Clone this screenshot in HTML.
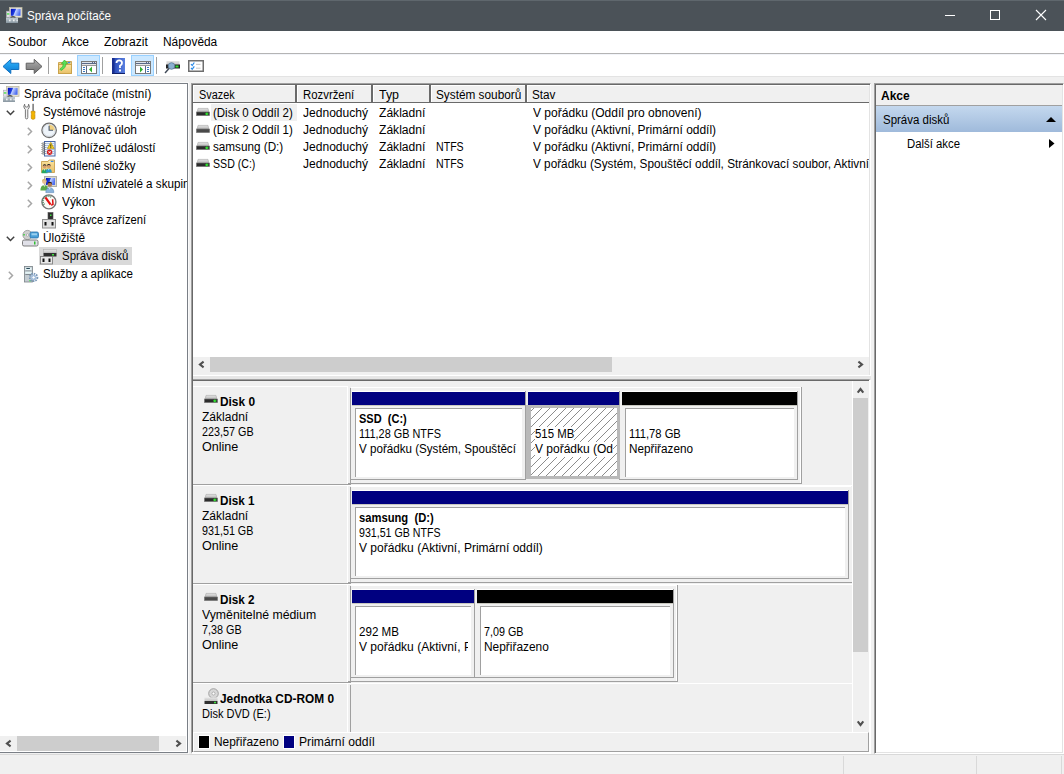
<!DOCTYPE html>
<html><head><meta charset="utf-8"><style>
*{box-sizing:border-box;margin:0;padding:0}
html,body{width:1064px;height:774px;overflow:hidden;background:#f0f0f0;font-family:"Liberation Sans",sans-serif;font-size:12px;color:#000;position:relative}
.a{position:absolute}
.t{position:absolute;white-space:nowrap;line-height:15px;height:15px}
svg{position:absolute;overflow:visible}
</style></head><body>
<svg width="0" height="0" style="position:absolute"><defs>
<linearGradient id="gscr" x1="0" y1="0" x2="1" y2="1"><stop offset="0" stop-color="#0010c0"/><stop offset="0.45" stop-color="#1a3be0"/><stop offset="0.55" stop-color="#c8d4ff"/><stop offset="1" stop-color="#3050e8"/></linearGradient>
<linearGradient id="gscr2" x1="0" y1="0" x2="1" y2="0.3"><stop offset="0" stop-color="#0008b8"/><stop offset="0.45" stop-color="#2040e0"/><stop offset="0.55" stop-color="#c0d0ff"/><stop offset="1" stop-color="#5070f0"/></linearGradient>
<linearGradient id="gdrvtop2" x1="0" y1="0" x2="0" y2="1"><stop offset="0" stop-color="#e4e4e4"/><stop offset="1" stop-color="#b8b8b8"/></linearGradient>
<linearGradient id="gbase" x1="0" y1="0" x2="0" y2="1"><stop offset="0" stop-color="#c6d0d6"/><stop offset="1" stop-color="#8896a0"/></linearGradient>
<linearGradient id="gdrvtop" x1="0" y1="0" x2="0" y2="1"><stop offset="0" stop-color="#e6e6e6"/><stop offset="1" stop-color="#c4c4c4"/></linearGradient>
<linearGradient id="gblue" x1="0" y1="0" x2="0" y2="1"><stop offset="0" stop-color="#2fb6ff"/><stop offset="1" stop-color="#0a78d0"/></linearGradient>
<linearGradient id="ggray" x1="0" y1="0" x2="0" y2="1"><stop offset="0" stop-color="#b0b0b0"/><stop offset="1" stop-color="#6e6e6e"/></linearGradient>
<linearGradient id="gfold" x1="0" y1="0" x2="0" y2="1"><stop offset="0" stop-color="#fbe3a0"/><stop offset="1" stop-color="#e8c068"/></linearGradient>
<linearGradient id="ghelp" x1="0" y1="0" x2="1" y2="0"><stop offset="0" stop-color="#2040b0"/><stop offset="1" stop-color="#5a80e0"/></linearGradient>
</defs></svg>
<div class="a" style="left:0px;top:0px;width:1064px;height:31px;background:#4b5258"></div>
<div class="a" style="left:0px;top:0px;width:1064px;height:1px;background:#5f676d"></div>
<div class="t" style="left:27px;top:9px;color:#fff;"><span id="s0" style="display:inline-block;transform-origin:0 0;transform:scaleX(0.9683);">Správa počítače</span></div>
<svg style="left:6px;top:7px;" width="17" height="17" viewBox="0 0 17 17"><rect x="3.5" y="0.5" width="12.5" height="9.8" fill="#ece8d4" stroke="#bcb8a4" stroke-width="0.8"/><rect x="4.8" y="1.8" width="9.8" height="7" fill="url(#gscr2)"/><rect x="0.4" y="4.2" width="3.6" height="6" fill="#e4e0e8" stroke="#a8a8b0" stroke-width="0.6"/><rect x="0.9" y="6.3" width="2.4" height="1.3" fill="#40e040"/><path d="M4.5 10.6 Q7 9.2 9.5 10.6" stroke="#1a1a1a" stroke-width="1.1" fill="none"/><rect x="0" y="10.6" width="12" height="5.4" fill="url(#gbase)"/><rect x="3.2" y="12.5" width="1.3" height="1.8" fill="#fff"/><rect x="7.2" y="12.5" width="1.3" height="1.8" fill="#fff"/><rect x="10.6" y="12.8" width="1" height="1.5" fill="#fff"/></svg>
<div class="a" style="left:945px;top:15px;width:10px;height:1px;background:#fff"></div>
<div class="a" style="left:990px;top:10px;width:10px;height:10px;border:1px solid #fff"></div>
<svg style="left:1036px;top:10px" width="10" height="10"><path d="M0 0L10 10M10 0L0 10" stroke="#fff" stroke-width="1.1"/></svg>
<div class="a" style="left:0px;top:31px;width:1064px;height:22px;background:#fff"></div>
<div class="a" style="left:0px;top:53px;width:1064px;height:1px;background:#b4b4b4"></div>
<div class="t" style="left:8px;top:35px;"><span id="s1" style="display:inline-block;transform-origin:0 0;transform:scaleX(0.9999);">Soubor</span></div>
<div class="t" style="left:62px;top:35px;"><span id="s2" style="display:inline-block;transform-origin:0 0;transform:scaleX(1.0122);">Akce</span></div>
<div class="t" style="left:104px;top:35px;"><span id="s3" style="display:inline-block;transform-origin:0 0;transform:scaleX(1.0092);">Zobrazit</span></div>
<div class="t" style="left:163px;top:35px;"><span id="s4" style="display:inline-block;transform-origin:0 0;transform:scaleX(0.9913);">Nápověda</span></div>
<div class="a" style="left:0px;top:54px;width:1064px;height:22px;background:#fff"></div>
<div class="a" style="left:0px;top:76px;width:1064px;height:1px;background:#e3e3e3"></div>
<div class="a" style="left:0px;top:54px;width:1064px;height:1px;background:#f2f4f9"></div>
<div class="a" style="left:48px;top:57px;width:1px;height:17px;background:#a0a0a0"></div>
<div class="a" style="left:102px;top:57px;width:1px;height:17px;background:#a0a0a0"></div>
<div class="a" style="left:156px;top:57px;width:1px;height:17px;background:#a0a0a0"></div>
<div class="a" style="left:77px;top:55px;width:23px;height:21px;background:#cce8ff;border:1px solid #99d1ff"></div>
<div class="a" style="left:131px;top:55px;width:23px;height:21px;background:#cce8ff;border:1px solid #99d1ff"></div>
<svg style="left:2px;top:58px;" width="18" height="17" viewBox="0 0 18 17"><path d="M1 8.5 L8.8 1.3 L8.8 5.2 L16.8 5.2 L16.8 11.5 L8.8 11.5 L8.8 15.5 Z" fill="url(#gblue)" stroke="#1070c0" stroke-width="1"/></svg>
<svg style="left:25px;top:58px;" width="18" height="17" viewBox="0 0 18 17"><path d="M17 8.5 L9.2 1.3 L9.2 5.2 L1.2 5.2 L1.2 11.5 L9.2 11.5 L9.2 15.5 Z" fill="url(#ggray)" stroke="#606060" stroke-width="1"/></svg>
<svg style="left:58px;top:60px;" width="15" height="15" viewBox="0 0 15 15"><path d="M0.5 2.5 H5 L6 1.5 H13.5 V13.5 H0.5 Z" fill="#f0d27e" stroke="#c8a048" stroke-width="0.9"/><rect x="0.5" y="4.5" width="13" height="9" fill="url(#gfold)" stroke="#c8a048" stroke-width="0.9"/><ellipse cx="11" cy="2.6" rx="1.5" ry="0.8" fill="#3a8ae8"/><path d="M6.5 0 L9.8 3.6 L8 3.6 Q7.8 8.3 3 10.5 L1.8 9 Q5.6 7.2 5.3 3.6 L3.4 3.6 Z" fill="#58e058" stroke="#2aa82a" stroke-width="0.6"/></svg>
<svg style="left:81px;top:61px;" width="16" height="13" viewBox="0 0 16 13"><rect x="0.5" y="0.5" width="15" height="12" fill="#fff" stroke="#7a7a7a"/><rect x="1" y="1" width="14" height="1" fill="#dde3ea"/><rect x="11" y="1" width="1" height="1" fill="#5a6a88"/><rect x="13" y="1" width="1" height="1" fill="#5a6a88"/><rect x="1" y="2" width="14" height="1" fill="#5a6a88"/><rect x="1" y="3" width="14" height="1" fill="#e6e6e6"/><rect x="1" y="4" width="14" height="1" fill="#9a9a9a"/><rect x="5" y="5" width="1" height="7" fill="#5a6a88"/><rect x="2" y="6" width="2" height="1" fill="#3a78c0"/><rect x="2" y="8" width="2" height="1" fill="#3a78c0"/><rect x="2" y="10" width="2" height="1" fill="#3a78c0"/><path d="M11 5.5 L11 11.5 L8 8.5 Z" fill="#30b030"/></svg>
<svg style="left:135px;top:61px;" width="16" height="13" viewBox="0 0 16 13"><rect x="0.5" y="0.5" width="15" height="12" fill="#fff" stroke="#7a7a7a"/><rect x="1" y="1" width="14" height="1" fill="#dde3ea"/><rect x="11" y="1" width="1" height="1" fill="#5a6a88"/><rect x="13" y="1" width="1" height="1" fill="#5a6a88"/><rect x="1" y="2" width="14" height="1" fill="#5a6a88"/><rect x="1" y="3" width="14" height="1" fill="#e6e6e6"/><rect x="1" y="4" width="14" height="1" fill="#9a9a9a"/><rect x="10" y="5" width="1" height="7" fill="#5a6a88"/><rect x="12" y="6" width="2" height="1" fill="#3a78c0"/><rect x="12" y="8" width="2" height="1" fill="#3a78c0"/><rect x="12" y="10" width="2" height="1" fill="#3a78c0"/><path d="M5 5.5 L5 11.5 L8 8.5 Z" fill="#30b030"/></svg>
<svg style="left:112px;top:58px;" width="13" height="16" viewBox="0 0 13 16"><rect x="0" y="0" width="13" height="16" fill="url(#ghelp)"/><rect x="0" y="0" width="2.5" height="16" fill="#1a2f90"/><rect x="0" y="15" width="13" height="1" fill="#10206a"/><path d="M4.5 5 Q4.5 2.3 7.2 2.3 Q10 2.3 10 5 Q10 6.8 8 7.8 L8 10" fill="none" stroke="#fff" stroke-width="1.8"/><rect x="7" y="11.5" width="2" height="2" fill="#fff"/></svg>
<svg style="left:164px;top:60px;" width="17" height="15" viewBox="0 0 17 15"><rect x="2.5" y="1" width="13" height="4" fill="url(#gdrvtop)"/><rect x="2" y="4.5" width="14" height="4" fill="#202020"/><rect x="11.5" y="5.5" width="3" height="2" fill="#30e030"/><circle cx="7.5" cy="6" r="3.3" fill="#8ab0d0" stroke="#5a7a98" stroke-width="0.8"/><path d="M5 8.5 L1 13" stroke="#404a58" stroke-width="1.4"/></svg>
<svg style="left:188px;top:60px;" width="16" height="12" viewBox="0 0 16 12"><rect x="0.75" y="0.75" width="14.5" height="10.5" fill="#fff" stroke="#6e6e6e" stroke-width="1.5"/><path d="M3 4 L4.2 5.5 L6.3 2.5M3 7.8 L4.2 9.3 L6.3 6.3" fill="none" stroke="#2a8ae8" stroke-width="1.2"/><path d="M8 4.4h4.5M8 8.2h4.5" stroke="#c0c0c0" stroke-width="0.9"/></svg>
<div class="a" style="left:0px;top:82px;width:189px;height:1px;background:#fafafa"></div>
<div class="a" style="left:188px;top:82px;width:1px;height:672px;background:#fafafa"></div>
<div class="a" style="left:0px;top:83px;width:188px;height:670px;background:#fff;border-top:1px solid #7a7f86;border-right:1px solid #7a7f86;border-bottom:1px solid #7a7f86"></div>
<div class="a" style="left:39px;top:247px;width:93px;height:18px;background:#d9d9d9"></div>
<svg style="left:3px;top:86px;" width="17" height="17" viewBox="0 0 17 17"><rect x="3.5" y="0.5" width="12.5" height="9.8" fill="#ece8d4" stroke="#bcb8a4" stroke-width="0.8"/><rect x="4.8" y="1.8" width="9.8" height="7" fill="url(#gscr2)"/><rect x="0.4" y="4.2" width="3.6" height="6" fill="#e4e0e8" stroke="#a8a8b0" stroke-width="0.6"/><rect x="0.9" y="6.3" width="2.4" height="1.3" fill="#40e040"/><path d="M4.5 10.6 Q7 9.2 9.5 10.6" stroke="#1a1a1a" stroke-width="1.1" fill="none"/><rect x="0" y="10.6" width="12" height="5.4" fill="url(#gbase)"/><rect x="3.2" y="12.5" width="1.3" height="1.8" fill="#fff"/><rect x="7.2" y="12.5" width="1.3" height="1.8" fill="#fff"/><rect x="10.6" y="12.8" width="1" height="1.5" fill="#fff"/></svg>
<svg style="left:23px;top:103px;" width="13" height="17" viewBox="0 0 13 17"><path d="M1.6 1.2 Q-0.2 3.8 1.8 6 L2.4 6.5 L2.4 14.6 Q2.4 15.9 3.6 15.9 Q4.8 15.9 4.8 14.6 L4.8 6.5 L5.4 6 Q7.4 3.8 5.6 1.2 L5.2 3.6 Q3.6 4.6 2 3.6 Z" fill="#f2f2f2" stroke="#6a6a6a" stroke-width="0.9"/><rect x="9.4" y="0.8" width="1.4" height="7.5" fill="#6a6a6a"/><path d="M8.2 8.3 L12 8.3 L12 10.2 L11.4 11 L11.9 11.6 L11.9 15.2 Q11.9 16.3 10.1 16.3 Q8.3 16.3 8.3 15.2 L8.3 11.6 L8.8 11 L8.2 10.2 Z" fill="#f2b400" stroke="#c48a00" stroke-width="0.7"/></svg>
<svg style="left:41px;top:122px;" width="17" height="17" viewBox="0 0 17 17"><circle cx="8.1" cy="8.3" r="7.2" fill="#eef4fa" stroke="#6e6e6e" stroke-width="1.3"/><circle cx="8.1" cy="8.3" r="6" fill="none" stroke="#c8ccd4" stroke-width="0.6"/><path d="M8.1 8.3 L8.1 2.6 A5.7 5.7 0 0 1 13.8 8.3 Z" fill="#f0d080"/><path d="M8.1 3.8 L8.1 8.8 M7.6 8.3 L12 8.3" stroke="#4a5a70" stroke-width="1.1" fill="none"/></svg>
<svg style="left:41px;top:141px;" width="15" height="16" viewBox="0 0 15 16"><rect x="3.5" y="0.5" width="10.5" height="14.5" fill="#eef4fc" stroke="#4a68a8"/><path d="M5 2.5h8" stroke="#a8c0e0" stroke-width="0.9"/><path d="M5 4.5h8" stroke="#a8c0e0" stroke-width="0.9"/><path d="M5 6.5h8" stroke="#a8c0e0" stroke-width="0.9"/><path d="M5 8.5h8" stroke="#a8c0e0" stroke-width="0.9"/><path d="M5 10.5h8" stroke="#a8c0e0" stroke-width="0.9"/><path d="M5 12.5h8" stroke="#a8c0e0" stroke-width="0.9"/><ellipse cx="2.6" cy="2.5" rx="1.7" ry="0.65" fill="none" stroke="#6a6a6a" stroke-width="0.8"/><ellipse cx="2.6" cy="4.5" rx="1.7" ry="0.65" fill="none" stroke="#6a6a6a" stroke-width="0.8"/><ellipse cx="2.6" cy="6.5" rx="1.7" ry="0.65" fill="none" stroke="#6a6a6a" stroke-width="0.8"/><ellipse cx="2.6" cy="8.5" rx="1.7" ry="0.65" fill="none" stroke="#6a6a6a" stroke-width="0.8"/><ellipse cx="2.6" cy="10.5" rx="1.7" ry="0.65" fill="none" stroke="#6a6a6a" stroke-width="0.8"/><ellipse cx="2.6" cy="12.5" rx="1.7" ry="0.65" fill="none" stroke="#6a6a6a" stroke-width="0.8"/><path d="M9.8 1.3 L13.2 7.6 L6.4 7.6 Z" fill="#f4d020" stroke="#b08800" stroke-width="0.6"/><rect x="9.35" y="3.3" width="0.9" height="2.4" fill="#222"/><rect x="9.35" y="6.2" width="0.9" height="0.9" fill="#222"/><circle cx="8.6" cy="11.2" r="2.7" fill="#d42020"/><path d="M7.5 10.1l2.2 2.2M9.7 10.1l-2.2 2.2" stroke="#fff" stroke-width="0.9"/></svg>
<svg style="left:41px;top:159px;" width="15" height="15" viewBox="0 0 15 15"><path d="M0.5 2.5 L7 2.5 L8 1 L13.5 1 L13.5 13.5 L0.5 13.5 Z" fill="url(#gfold)" stroke="#c8a050" stroke-width="0.9"/><rect x="9.5" y="1.8" width="3" height="1.2" fill="#3a8ae0"/><rect x="8.5" y="1.8" width="1" height="1.2" fill="#fff"/><circle cx="3.6" cy="7.6" r="1.9" fill="#d8a070"/><path d="M1.7 7.3 Q1.8 5.2 3.6 5.3 Q5.4 5.2 5.5 7.3 Q4.5 6.2 3.6 6.3 Q2.6 6.2 1.7 7.3 Z" fill="#202020"/><path d="M0.6 14.3 Q0.6 10.2 3.6 10.2 Q6.6 10.2 6.6 14.3 Z" fill="#28a860"/><path d="M3 10.3 L3.6 12 L4.2 10.3 Z" fill="#fff"/><circle cx="7.8" cy="7.2" r="1.9" fill="#d8a070"/><path d="M5.9 6.9 Q6 4.8 7.8 4.9 Q9.6 4.8 9.7 6.9 Q8.7 5.8 7.8 5.9 Q6.8 5.8 5.9 6.9 Z" fill="#202020"/><path d="M4.8 13.6 Q4.8 9.8 7.8 9.8 Q10.8 9.8 10.8 13.6 Z" fill="#2a98d0"/><path d="M7.2 9.9 L7.8 11.6 L8.4 9.9 Z" fill="#fff"/></svg>
<svg style="left:40px;top:176px;" width="17" height="17" viewBox="0 0 17 17"><rect x="4.5" y="0.5" width="12" height="10" fill="#d8d8d0" stroke="#b0b0a8"/><rect x="6" y="2" width="9" height="7" fill="url(#gscr2)"/><circle cx="4.3" cy="5.6" r="2.3" fill="#e8c090"/><path d="M2 5.4 Q2 3 4.3 3 Q6.6 3 6.6 5.4 Q5.5 4.2 4.3 4.3 Q3 4.2 2 5.4 Z" fill="#c8b060"/><path d="M0.4 14.5 Q0.4 9.2 4.3 9.2 Q8.2 9.2 8.2 14.5 Z" fill="#5aa848"/><path d="M3.7 9.3 L4.3 11.2 L4.9 9.3 Z" fill="#fff"/><circle cx="9.8" cy="8.4" r="2.3" fill="#b07850"/><path d="M7.5 8.2 Q7.5 5.8 9.8 5.8 Q12.1 5.8 12.1 8.2 Q11 7 9.8 7.1 Q8.5 7 7.5 8.2 Z" fill="#282018"/><path d="M5.8 16.6 Q5.8 11.8 9.8 11.8 Q13.8 11.8 13.8 16.6 Z" fill="#8ab4dc" stroke="#5a88b8" stroke-width="0.6"/><path d="M9.2 11.9 L9.8 13.8 L10.4 11.9 Z" fill="#fff"/></svg>
<svg style="left:41px;top:194px;" width="17" height="17" viewBox="0 0 17 17"><circle cx="7.9" cy="7.9" r="7" fill="#fbfaf6" stroke="#767676" stroke-width="1.4"/><path d="M3.4 10.6 A5 5 0 0 1 10.5 3.4" stroke="#4a8060" stroke-width="1.5" fill="none" stroke-dasharray="1.1 0.9"/><path d="M11.6 5.3 L12 10.4 L10.2 11.2" stroke="#dd1010" stroke-width="1.5" fill="none"/><path d="M4.4 3.4 L9.6 10.6" stroke="#e41010" stroke-width="2.2"/></svg>
<svg style="left:42px;top:212px;" width="14" height="17" viewBox="0 0 14 17"><rect x="6" y="0.5" width="5" height="8" fill="#303030" stroke="#505050" stroke-width="0.6"/><rect x="8" y="2.5" width="1.5" height="1.5" fill="#40e040"/><rect x="0.5" y="7.5" width="13" height="8.5" fill="#e0e0e0" stroke="#909090"/><rect x="2.5" y="10" width="2" height="3.5" fill="#101010"/><rect x="9.5" y="10" width="2" height="3.5" fill="#101010"/></svg>
<svg style="left:22px;top:230px;" width="17" height="17" viewBox="0 0 17 17"><circle cx="5.5" cy="5" r="4.6" fill="#d0d0d0" stroke="#909090" stroke-width="0.8"/><circle cx="5.5" cy="5" r="1.2" fill="#fff" stroke="#808080" stroke-width="0.5"/><rect x="1.3" y="4" width="1.5" height="1.5" fill="#40d040"/><rect x="8" y="2" width="8.5" height="6" rx="1.5" fill="#4aa0d8" stroke="#2a70a8" stroke-width="0.8"/><rect x="9.5" y="3.3" width="5.5" height="2" fill="#9ad0f0"/><rect x="0.5" y="10" width="15.5" height="6" rx="1.5" fill="#e0e0e8" stroke="#707070" stroke-width="0.9"/><rect x="12" y="11.5" width="1.5" height="3" fill="#30c030"/></svg>
<svg style="left:40px;top:249px;" width="17" height="16" viewBox="0 0 17 16"><rect x="3.5" y="0.5" width="13" height="3.5" fill="url(#gdrvtop)" stroke="#b0b0b0" stroke-width="0.6"/><rect x="3.5" y="4" width="13" height="3.5" fill="#303030"/><rect x="12" y="5" width="2" height="1.5" fill="#40e040"/><rect x="0.5" y="7.5" width="12" height="7.5" fill="#e8e8e8" stroke="#808080" stroke-width="0.9"/><rect x="2.5" y="9.5" width="2" height="3.5" fill="#101010"/><rect x="8.5" y="9.5" width="2" height="3.5" fill="#101010"/></svg>
<svg style="left:24px;top:266px;" width="15" height="17" viewBox="0 0 15 17"><rect x="0.4" y="0.4" width="8" height="15.6" fill="#c4ccd2" stroke="#7a8288" stroke-width="0.8"/><rect x="1.3" y="1.6" width="6.2" height="2.6" fill="#e4f4f6"/><rect x="2.3" y="2" width="3.6" height="1" fill="#284858"/><rect x="1.3" y="4.6" width="6.2" height="0.8" fill="#707880"/><rect x="1.3" y="5.6" width="6.2" height="2.2" fill="#e4f4f6"/><rect x="1.3" y="8" width="6.2" height="0.8" fill="#707880"/><rect x="5.3" y="14" width="2" height="1.3" fill="#50e050"/><circle cx="9.6" cy="11.4" r="3.7" fill="none" stroke="#7a98b8" stroke-width="2" stroke-dasharray="1.5 0.95"/><circle cx="9.6" cy="11.4" r="2.8" fill="#a8c0dc"/><path d="M9.6 9.8 L10.4 11.4 L9.6 13 L8.8 11.4 Z" fill="#fff"/><path d="M8 11.4 L9.6 10.6 L11.2 11.4 L9.6 12.2 Z" fill="#fff"/></svg>
<div class="t" style="left:24px;top:87px;width:163px;overflow:hidden;"><span id="s5" style="display:inline-block;transform-origin:0 0;transform:scaleX(0.9736);">Správa počítače (místní)</span></div>
<div class="t" style="left:43px;top:105px;width:144px;overflow:hidden;"><span id="s6" style="display:inline-block;transform-origin:0 0;transform:scaleX(0.9742);">Systémové nástroje</span></div>
<svg style="left:6px;top:110px;" width="10" height="7" viewBox="0 0 10 7"><path d="M0.8 0.8L4.5 4.5L8.2 0.8" fill="none" stroke="#404040" stroke-width="1.5"/></svg>
<div class="t" style="left:62px;top:123px;width:125px;overflow:hidden;"><span id="s7" style="display:inline-block;transform-origin:0 0;transform:scaleX(0.9947);">Plánovač úloh</span></div>
<svg style="left:27px;top:127px;" width="7" height="10" viewBox="0 0 7 10"><path d="M0.8 0.8L4.5 4.5L0.8 8.2" fill="none" stroke="#a6a6a6" stroke-width="1.5"/></svg>
<div class="t" style="left:62px;top:141px;width:125px;overflow:hidden;"><span id="s8" style="display:inline-block;transform-origin:0 0;transform:scaleX(0.9800);">Prohlížeč událostí</span></div>
<svg style="left:27px;top:145px;" width="7" height="10" viewBox="0 0 7 10"><path d="M0.8 0.8L4.5 4.5L0.8 8.2" fill="none" stroke="#a6a6a6" stroke-width="1.5"/></svg>
<div class="t" style="left:62px;top:159px;width:125px;overflow:hidden;"><span id="s9" style="display:inline-block;transform-origin:0 0;transform:scaleX(0.9506);">Sdílené složky</span></div>
<svg style="left:27px;top:163px;" width="7" height="10" viewBox="0 0 7 10"><path d="M0.8 0.8L4.5 4.5L0.8 8.2" fill="none" stroke="#a6a6a6" stroke-width="1.5"/></svg>
<div class="t" style="left:62px;top:177px;width:125px;overflow:hidden;"><span style="display:inline-block;transform-origin:0 0;transform:scaleX(0.97)">Místní uživatelé a skupiny</span></div>
<svg style="left:27px;top:181px;" width="7" height="10" viewBox="0 0 7 10"><path d="M0.8 0.8L4.5 4.5L0.8 8.2" fill="none" stroke="#a6a6a6" stroke-width="1.5"/></svg>
<div class="t" style="left:62px;top:195px;width:125px;overflow:hidden;"><span id="s10" style="display:inline-block;transform-origin:0 0;transform:scaleX(0.9889);">Výkon</span></div>
<svg style="left:27px;top:199px;" width="7" height="10" viewBox="0 0 7 10"><path d="M0.8 0.8L4.5 4.5L0.8 8.2" fill="none" stroke="#a6a6a6" stroke-width="1.5"/></svg>
<div class="t" style="left:62px;top:213px;width:125px;overflow:hidden;"><span id="s11" style="display:inline-block;transform-origin:0 0;transform:scaleX(0.9343);">Správce zařízení</span></div>
<div class="t" style="left:43px;top:231px;width:144px;overflow:hidden;"><span id="s12" style="display:inline-block;transform-origin:0 0;transform:scaleX(0.9835);">Úložiště</span></div>
<svg style="left:6px;top:236px;" width="10" height="7" viewBox="0 0 10 7"><path d="M0.8 0.8L4.5 4.5L8.2 0.8" fill="none" stroke="#404040" stroke-width="1.5"/></svg>
<div class="t" style="left:62px;top:249px;width:125px;overflow:hidden;"><span id="s13" style="display:inline-block;transform-origin:0 0;transform:scaleX(0.9565);">Správa disků</span></div>
<div class="t" style="left:43px;top:267px;width:144px;overflow:hidden;"><span id="s14" style="display:inline-block;transform-origin:0 0;transform:scaleX(0.9633);">Služby a aplikace</span></div>
<svg style="left:8px;top:271px;" width="7" height="10" viewBox="0 0 7 10"><path d="M0.8 0.8L4.5 4.5L0.8 8.2" fill="none" stroke="#a6a6a6" stroke-width="1.5"/></svg>
<div class="a" style="left:0px;top:736px;width:187px;height:16px;background:#f0f0f0;border-right:1px solid #fff;border-bottom:1px solid #fff"></div>
<div class="a" style="left:17px;top:736px;width:142px;height:15px;background:#cdcdcd"></div>
<svg style="left:4px;top:739px;" width="9" height="10" viewBox="0 0 9 10"><path d="M6.6 1.7 L3 4.5 L6.6 7.3" fill="none" stroke="#505050" stroke-width="2.1"/></svg>
<svg style="left:175px;top:739px;" width="9" height="10" viewBox="0 0 9 10"><path d="M1.4 1.7 L5 4.5 L1.4 7.3" fill="none" stroke="#505050" stroke-width="2.1"/></svg>
<div class="a" style="left:191px;top:83px;width:680px;height:293px;background:#fff;border-top:1px solid #a0a0a0;border-left:1px solid #a0a0a0;border-right:1px solid #fff;border-bottom:1px solid #fff;box-shadow:inset 1px 1px #696969,inset -1px -1px #e3e3e3"></div>
<div class="a" style="left:193px;top:85px;width:676px;height:18px;background:#f0f0f0;border-top:1px solid #fff;border-bottom:1px solid #6a6a6a"></div>
<div class="a" style="left:193px;top:85px;width:1px;height:17px;background:#fff"></div>
<div class="a" style="left:295px;top:85px;width:2px;height:17px;background:#6a6a6a"></div>
<div class="a" style="left:297px;top:86px;width:1px;height:16px;background:#fff"></div>
<div class="a" style="left:371px;top:85px;width:2px;height:17px;background:#6a6a6a"></div>
<div class="a" style="left:373px;top:86px;width:1px;height:16px;background:#fff"></div>
<div class="a" style="left:429px;top:85px;width:2px;height:17px;background:#6a6a6a"></div>
<div class="a" style="left:431px;top:86px;width:1px;height:16px;background:#fff"></div>
<div class="a" style="left:525px;top:85px;width:2px;height:17px;background:#6a6a6a"></div>
<div class="a" style="left:527px;top:86px;width:1px;height:16px;background:#fff"></div>
<div class="t" style="left:199px;top:88px;"><span id="s15" style="display:inline-block;transform-origin:0 0;transform:scaleX(0.9046);">Svazek</span></div>
<div class="t" style="left:303px;top:88px;"><span id="s16" style="display:inline-block;transform-origin:0 0;transform:scaleX(0.9466);">Rozvržení</span></div>
<div class="t" style="left:379px;top:88px;"><span id="s17" style="display:inline-block;transform-origin:0 0;transform:scaleX(1.0358);">Typ</span></div>
<div class="t" style="left:436px;top:88px;"><span id="s18" style="display:inline-block;transform-origin:0 0;transform:scaleX(0.9834);">Systém souborů</span></div>
<div class="t" style="left:532px;top:88px;"><span id="s19" style="display:inline-block;transform-origin:0 0;transform:scaleX(0.9776);">Stav</span></div>
<div class="a" style="left:211px;top:104px;width:86px;height:17px;background:#f0f0f0"></div>
<svg style="left:196px;top:108px;" width="14" height="8" viewBox="0 0 14 8"><path d="M1.2 4 L2 0.4 H12 L12.8 4 Z" fill="url(#gdrvtop2)" stroke="#a8a8a8" stroke-width="0.6"/><rect x="0.4" y="4" width="13.2" height="3.6" fill="#2c2c2c" stroke="#7a7a7a" stroke-width="0.6"/><rect x="10" y="4.6" width="1.6" height="2.6" fill="#30e030"/><rect x="9.2" y="5.3" width="3.2" height="1.2" fill="#30e030"/></svg>
<div class="t" style="left:213px;top:106px;"><span id="s20" style="display:inline-block;transform-origin:0 0;transform:scaleX(0.9568);">(Disk 0 Oddíl 2)</span></div>
<div class="t" style="left:303px;top:106px;"><span id="s21" style="display:inline-block;transform-origin:0 0;transform:scaleX(1.0044);">Jednoduchý</span></div>
<div class="t" style="left:379px;top:106px;"><span id="s22" style="display:inline-block;transform-origin:0 0;transform:scaleX(1.0082);">Základní</span></div>
<div class="t" style="left:436px;top:106px;"></div>
<div class="t" style="left:533px;top:106px;width:336px;overflow:hidden;"><span id="s23" style="display:inline-block;transform-origin:0 0;transform:scaleX(1.0029);">V pořádku (Oddíl pro obnovení)</span></div>
<svg style="left:196px;top:125px;" width="14" height="8" viewBox="0 0 14 8"><path d="M1.2 4 L2 0.4 H12 L12.8 4 Z" fill="url(#gdrvtop2)" stroke="#a8a8a8" stroke-width="0.6"/><rect x="0.4" y="4" width="13.2" height="3.6" fill="#4a4a4a" stroke="#7a7a7a" stroke-width="0.6"/></svg>
<div class="t" style="left:213px;top:123px;"><span id="s24" style="display:inline-block;transform-origin:0 0;transform:scaleX(0.9568);">(Disk 2 Oddíl 1)</span></div>
<div class="t" style="left:303px;top:123px;"><span id="s25" style="display:inline-block;transform-origin:0 0;transform:scaleX(1.0044);">Jednoduchý</span></div>
<div class="t" style="left:379px;top:123px;"><span id="s26" style="display:inline-block;transform-origin:0 0;transform:scaleX(1.0082);">Základní</span></div>
<div class="t" style="left:436px;top:123px;"></div>
<div class="t" style="left:533px;top:123px;width:336px;overflow:hidden;"><span id="s27" style="display:inline-block;transform-origin:0 0;transform:scaleX(0.9983);">V pořádku (Aktivní, Primární oddíl)</span></div>
<svg style="left:196px;top:142px;" width="14" height="8" viewBox="0 0 14 8"><path d="M1.2 4 L2 0.4 H12 L12.8 4 Z" fill="url(#gdrvtop2)" stroke="#a8a8a8" stroke-width="0.6"/><rect x="0.4" y="4" width="13.2" height="3.6" fill="#2c2c2c" stroke="#7a7a7a" stroke-width="0.6"/><rect x="10" y="4.6" width="1.6" height="2.6" fill="#30e030"/><rect x="9.2" y="5.3" width="3.2" height="1.2" fill="#30e030"/></svg>
<div class="t" style="left:213px;top:140px;"><span id="s28" style="display:inline-block;transform-origin:0 0;transform:scaleX(0.9756);">samsung (D:)</span></div>
<div class="t" style="left:303px;top:140px;"><span id="s29" style="display:inline-block;transform-origin:0 0;transform:scaleX(1.0044);">Jednoduchý</span></div>
<div class="t" style="left:379px;top:140px;"><span id="s30" style="display:inline-block;transform-origin:0 0;transform:scaleX(1.0082);">Základní</span></div>
<div class="t" style="left:436px;top:140px;"><span id="s31" style="display:inline-block;transform-origin:0 0;transform:scaleX(0.8832);">NTFS</span></div>
<div class="t" style="left:533px;top:140px;width:336px;overflow:hidden;"><span id="s32" style="display:inline-block;transform-origin:0 0;transform:scaleX(0.9983);">V pořádku (Aktivní, Primární oddíl)</span></div>
<svg style="left:196px;top:159px;" width="14" height="8" viewBox="0 0 14 8"><path d="M1.2 4 L2 0.4 H12 L12.8 4 Z" fill="url(#gdrvtop2)" stroke="#a8a8a8" stroke-width="0.6"/><rect x="0.4" y="4" width="13.2" height="3.6" fill="#2c2c2c" stroke="#7a7a7a" stroke-width="0.6"/><rect x="10" y="4.6" width="1.6" height="2.6" fill="#30e030"/><rect x="9.2" y="5.3" width="3.2" height="1.2" fill="#30e030"/></svg>
<div class="t" style="left:213px;top:157px;"><span id="s33" style="display:inline-block;transform-origin:0 0;transform:scaleX(0.8830);">SSD (C:)</span></div>
<div class="t" style="left:303px;top:157px;"><span id="s34" style="display:inline-block;transform-origin:0 0;transform:scaleX(1.0044);">Jednoduchý</span></div>
<div class="t" style="left:379px;top:157px;"><span id="s35" style="display:inline-block;transform-origin:0 0;transform:scaleX(1.0082);">Základní</span></div>
<div class="t" style="left:436px;top:157px;"><span id="s36" style="display:inline-block;transform-origin:0 0;transform:scaleX(0.8832);">NTFS</span></div>
<div class="t" style="left:533px;top:157px;width:336px;overflow:hidden;"><span style="display:inline-block;transform-origin:0 0;transform:scaleX(0.98)">V pořádku (Systém, Spouštěcí oddíl, Stránkovací soubor, Aktivní, Výpis stavu systému, Primární oddíl)</span></div>
<div class="a" style="left:193px;top:357px;width:676px;height:18px;background:#f0f0f0"></div>
<div class="a" style="left:210px;top:357px;width:402px;height:15px;background:#cdcdcd"></div>
<svg style="left:197px;top:360px;" width="9" height="10" viewBox="0 0 9 10"><path d="M6.6 1.7 L3 4.5 L6.6 7.3" fill="none" stroke="#505050" stroke-width="2.1"/></svg>
<svg style="left:857px;top:360px;" width="9" height="10" viewBox="0 0 9 10"><path d="M1.4 1.7 L5 4.5 L1.4 7.3" fill="none" stroke="#505050" stroke-width="2.1"/></svg>
<div class="a" style="left:193px;top:375px;width:677px;height:1px;background:#fff"></div>
<div class="a" style="left:193px;top:376px;width:678px;height:3px;background:#e6e6e6"></div>
<div class="a" style="left:191px;top:379px;width:680px;height:375px;background:#f0f0f0;border-top:1px solid #a0a0a0;border-left:1px solid #a0a0a0;border-right:2px solid #fff;border-bottom:2px solid #fff;box-shadow:inset 1px 1px #696969"></div>
<div class="a" style="left:191px;top:375px;width:1px;height:5px;background:#a0a0a0"></div>
<div class="a" style="left:192px;top:375px;width:1px;height:5px;background:#696969"></div>
<div class="a" style="left:853px;top:381px;width:16px;height:351px;background:#f0f0f0"></div>
<div class="a" style="left:853px;top:398px;width:15px;height:254px;background:#cdcdcd"></div>
<svg style="left:856px;top:386px;" width="10" height="9" viewBox="0 0 10 9"><path d="M1.7 6.6 L4.5 3 L7.3 6.6" fill="none" stroke="#505050" stroke-width="2.1"/></svg>
<svg style="left:856px;top:720px;" width="10" height="9" viewBox="0 0 10 9"><path d="M1.7 1.4 L4.5 5 L7.3 1.4" fill="none" stroke="#505050" stroke-width="2.1"/></svg>
<div class="a" style="left:852px;top:381px;width:1px;height:351px;background:#fff"></div>
<div class="a" style="left:193px;top:386px;width:155px;height:98px;background:#f0f0f0;border-top:1px solid #fff;border-right:1px solid #fff"></div>
<div class="a" style="left:350px;top:388px;width:1px;height:97px;background:#a0a0a0"></div>
<div class="a" style="left:193px;top:484px;width:155px;height:1px;background:#a0a0a0"></div>
<div class="a" style="left:348px;top:483px;width:2px;height:2px;background:#a0a0a0"></div>
<div class="a" style="left:350px;top:483px;width:452px;height:1px;background:#a0a0a0"></div>
<div class="a" style="left:193px;top:485px;width:659px;height:1px;background:#fff"></div>
<div class="t" style="left:220px;top:395px;font-weight:bold;"><span id="s37" style="display:inline-block;transform-origin:0 0;transform:scaleX(0.9895);">Disk 0</span></div>
<div class="t" style="left:202px;top:410px;"><span id="s38" style="display:inline-block;transform-origin:0 0;transform:scaleX(1.0037);">Základní</span></div>
<div class="t" style="left:202px;top:425px;"><span id="s39" style="display:inline-block;transform-origin:0 0;transform:scaleX(0.8993);">223,57 GB</span></div>
<div class="t" style="left:202px;top:440px;"><span id="s40" style="display:inline-block;transform-origin:0 0;transform:scaleX(1.0479);">Online</span></div>
<svg style="left:204px;top:395px;" width="14" height="8" viewBox="0 0 14 8"><path d="M1.2 4 L2 0.4 H12 L12.8 4 Z" fill="url(#gdrvtop2)" stroke="#a8a8a8" stroke-width="0.6"/><rect x="0.4" y="4" width="13.2" height="3.6" fill="#2c2c2c" stroke="#7a7a7a" stroke-width="0.6"/><rect x="10" y="4.6" width="1.6" height="2.6" fill="#30e030"/><rect x="9.2" y="5.3" width="3.2" height="1.2" fill="#30e030"/></svg>
<div class="a" style="left:351px;top:387px;width:450px;height:1px;background:#fff"></div>
<div class="a" style="left:800px;top:387px;width:1px;height:96px;background:#fff"></div>
<div class="a" style="left:801px;top:387px;width:1px;height:97px;background:#a0a0a0"></div>
<div class="a" style="left:352px;top:391px;width:173px;height:1px;background:#fff"></div>
<div class="a" style="left:352px;top:392px;width:173px;height:13px;background:#000080"></div>
<div class="a" style="left:525px;top:391px;width:1px;height:89px;background:#a0a0a0"></div>
<div class="a" style="left:352px;top:405px;width:173px;height:1px;background:#c8c8c0"></div>
<div class="a" style="left:351px;top:479px;width:175px;height:1px;background:#a0a0a0"></div>
<div class="a" style="left:355px;top:408px;width:167px;height:69px;background:#fff;border-left:1px solid #a0a0a0;border-top:1px solid #a0a0a0"></div>
<div class="t" style="left:359px;top:412px;font-weight:bold;width:160px;overflow:hidden;"><span id="s41" style="display:inline-block;transform-origin:0 0;transform:scaleX(0.9176);">SSD&nbsp;&nbsp;(C:)</span></div>
<div class="t" style="left:359px;top:427px;width:160px;overflow:hidden;"><span id="s42" style="display:inline-block;transform-origin:0 0;transform:scaleX(0.9074);">111,28 GB NTFS</span></div>
<div class="t" style="left:359px;top:442px;width:160px;overflow:hidden;"><span style="display:inline-block;transform-origin:0 0;transform:scaleX(0.968)">V pořádku (Systém, Spouštěcí oddíl, Stránkovací soubor)</span></div>
<div class="a" style="left:528px;top:391px;width:91px;height:1px;background:#fff"></div>
<div class="a" style="left:528px;top:392px;width:91px;height:13px;background:#000080"></div>
<div class="a" style="left:619px;top:391px;width:1px;height:89px;background:#a0a0a0"></div>
<div class="a" style="left:526px;top:405px;width:94px;height:74px;background:#b9b9b9"></div>
<svg style="left:531px;top:408px" width="86" height="68" shape-rendering="crispEdges"><defs><pattern id="hp" patternUnits="userSpaceOnUse" width="8" height="8" x="3" y="0"><rect width="8" height="8" fill="#fff"/><path d="M0 8L8 0" stroke="#8c8c8c" stroke-width="1"/></pattern></defs><rect width="86" height="68" fill="url(#hp)"/></svg>
<div class="t" style="left:535px;top:427px;width:78px;overflow:hidden;"><span id="s43" style="display:inline-block;transform-origin:0 0;transform:scaleX(0.9490);background:#fff">515 MB</span></div>
<div class="t" style="left:535px;top:442px;width:78px;overflow:hidden;"><span style="display:inline-block;background:#fff">V pořádku (Oddíl pro obnovení)</span></div>
<div class="a" style="left:622px;top:391px;width:175px;height:1px;background:#fff"></div>
<div class="a" style="left:622px;top:392px;width:175px;height:13px;background:#000000"></div>
<div class="a" style="left:797px;top:391px;width:1px;height:89px;background:#a0a0a0"></div>
<div class="a" style="left:622px;top:405px;width:175px;height:1px;background:#c8c8c0"></div>
<div class="a" style="left:620px;top:479px;width:178px;height:1px;background:#a0a0a0"></div>
<div class="a" style="left:625px;top:408px;width:169px;height:69px;background:#fff;border-left:1px solid #a0a0a0;border-top:1px solid #a0a0a0"></div>
<div class="t" style="left:629px;top:427px;width:162px;overflow:hidden;"><span id="s44" style="display:inline-block;transform-origin:0 0;transform:scaleX(0.9323);">111,78 GB</span></div>
<div class="t" style="left:629px;top:442px;width:162px;overflow:hidden;"><span id="s45" style="display:inline-block;transform-origin:0 0;transform:scaleX(0.9786);">Nepřiřazeno</span></div>
<div class="a" style="left:193px;top:485px;width:155px;height:98px;background:#f0f0f0;border-top:1px solid #fff;border-right:1px solid #fff"></div>
<div class="a" style="left:350px;top:487px;width:1px;height:97px;background:#a0a0a0"></div>
<div class="a" style="left:193px;top:583px;width:155px;height:1px;background:#a0a0a0"></div>
<div class="a" style="left:348px;top:582px;width:2px;height:2px;background:#a0a0a0"></div>
<div class="a" style="left:350px;top:582px;width:502px;height:1px;background:#a0a0a0"></div>
<div class="a" style="left:193px;top:584px;width:659px;height:1px;background:#fff"></div>
<div class="t" style="left:220px;top:494px;font-weight:bold;"><span id="s46" style="display:inline-block;transform-origin:0 0;transform:scaleX(0.9750);">Disk 1</span></div>
<div class="t" style="left:202px;top:509px;"><span id="s47" style="display:inline-block;transform-origin:0 0;transform:scaleX(1.0037);">Základní</span></div>
<div class="t" style="left:202px;top:524px;"><span id="s48" style="display:inline-block;transform-origin:0 0;transform:scaleX(0.8958);">931,51 GB</span></div>
<div class="t" style="left:202px;top:539px;"><span id="s49" style="display:inline-block;transform-origin:0 0;transform:scaleX(1.0479);">Online</span></div>
<svg style="left:204px;top:494px;" width="14" height="8" viewBox="0 0 14 8"><path d="M1.2 4 L2 0.4 H12 L12.8 4 Z" fill="url(#gdrvtop2)" stroke="#a8a8a8" stroke-width="0.6"/><rect x="0.4" y="4" width="13.2" height="3.6" fill="#2c2c2c" stroke="#7a7a7a" stroke-width="0.6"/><rect x="10" y="4.6" width="1.6" height="2.6" fill="#30e030"/><rect x="9.2" y="5.3" width="3.2" height="1.2" fill="#30e030"/></svg>
<div class="a" style="left:351px;top:486px;width:500px;height:1px;background:#fff"></div>
<div class="a" style="left:352px;top:490px;width:496px;height:1px;background:#fff"></div>
<div class="a" style="left:352px;top:491px;width:496px;height:13px;background:#000080"></div>
<div class="a" style="left:848px;top:490px;width:1px;height:89px;background:#a0a0a0"></div>
<div class="a" style="left:352px;top:504px;width:496px;height:1px;background:#c8c8c0"></div>
<div class="a" style="left:351px;top:578px;width:498px;height:1px;background:#a0a0a0"></div>
<div class="a" style="left:355px;top:507px;width:490px;height:69px;background:#fff;border-left:1px solid #a0a0a0;border-top:1px solid #a0a0a0"></div>
<div class="t" style="left:359px;top:511px;font-weight:bold;width:483px;overflow:hidden;"><span id="s50" style="display:inline-block;transform-origin:0 0;transform:scaleX(0.9340);">samsung&nbsp;&nbsp;(D:)</span></div>
<div class="t" style="left:359px;top:526px;width:483px;overflow:hidden;"><span id="s51" style="display:inline-block;transform-origin:0 0;transform:scaleX(0.8853);">931,51 GB NTFS</span></div>
<div class="t" style="left:359px;top:541px;width:483px;overflow:hidden;"><span id="s52" style="display:inline-block;transform-origin:0 0;transform:scaleX(1.0016);">V pořádku (Aktivní, Primární oddíl)</span></div>
<div class="a" style="left:193px;top:584px;width:155px;height:98px;background:#f0f0f0;border-top:1px solid #fff;border-right:1px solid #fff"></div>
<div class="a" style="left:350px;top:586px;width:1px;height:97px;background:#a0a0a0"></div>
<div class="a" style="left:193px;top:682px;width:155px;height:1px;background:#a0a0a0"></div>
<div class="a" style="left:348px;top:681px;width:2px;height:2px;background:#a0a0a0"></div>
<div class="a" style="left:350px;top:681px;width:328px;height:1px;background:#a0a0a0"></div>
<div class="a" style="left:193px;top:683px;width:659px;height:1px;background:#fff"></div>
<div class="t" style="left:220px;top:593px;font-weight:bold;"><span id="s53" style="display:inline-block;transform-origin:0 0;transform:scaleX(0.9750);">Disk 2</span></div>
<div class="t" style="left:202px;top:608px;"><span id="s54" style="display:inline-block;transform-origin:0 0;transform:scaleX(1.0225);">Vyměnitelné médium</span></div>
<div class="t" style="left:202px;top:623px;"><span id="s55" style="display:inline-block;transform-origin:0 0;transform:scaleX(0.8993);">7,38 GB</span></div>
<div class="t" style="left:202px;top:638px;"><span id="s56" style="display:inline-block;transform-origin:0 0;transform:scaleX(1.0479);">Online</span></div>
<svg style="left:204px;top:593px;" width="14" height="8" viewBox="0 0 14 8"><path d="M1.2 4 L2 0.4 H12 L12.8 4 Z" fill="url(#gdrvtop2)" stroke="#a8a8a8" stroke-width="0.6"/><rect x="0.4" y="4" width="13.2" height="3.6" fill="#4a4a4a" stroke="#7a7a7a" stroke-width="0.6"/></svg>
<div class="a" style="left:351px;top:585px;width:326px;height:1px;background:#fff"></div>
<div class="a" style="left:676px;top:585px;width:1px;height:96px;background:#fff"></div>
<div class="a" style="left:677px;top:585px;width:1px;height:97px;background:#a0a0a0"></div>
<div class="a" style="left:352px;top:589px;width:122px;height:1px;background:#fff"></div>
<div class="a" style="left:352px;top:590px;width:122px;height:13px;background:#000080"></div>
<div class="a" style="left:474px;top:589px;width:1px;height:89px;background:#a0a0a0"></div>
<div class="a" style="left:352px;top:603px;width:122px;height:1px;background:#c8c8c0"></div>
<div class="a" style="left:351px;top:677px;width:124px;height:1px;background:#a0a0a0"></div>
<div class="a" style="left:355px;top:606px;width:116px;height:69px;background:#fff;border-left:1px solid #a0a0a0;border-top:1px solid #a0a0a0"></div>
<div class="t" style="left:359px;top:625px;width:109px;overflow:hidden;"><span id="s57" style="display:inline-block;transform-origin:0 0;transform:scaleX(0.9663);">292 MB</span></div>
<div class="t" style="left:359px;top:640px;width:109px;overflow:hidden;"><span id="s58" style="display:inline-block;transform-origin:0 0;transform:scaleX(1.0016);">V pořádku (Aktivní, Primární oddíl)</span></div>
<div class="a" style="left:477px;top:589px;width:196px;height:1px;background:#fff"></div>
<div class="a" style="left:477px;top:590px;width:196px;height:13px;background:#000000"></div>
<div class="a" style="left:673px;top:589px;width:1px;height:89px;background:#a0a0a0"></div>
<div class="a" style="left:477px;top:603px;width:196px;height:1px;background:#c8c8c0"></div>
<div class="a" style="left:475px;top:677px;width:199px;height:1px;background:#a0a0a0"></div>
<div class="a" style="left:480px;top:606px;width:190px;height:69px;background:#fff;border-left:1px solid #a0a0a0;border-top:1px solid #a0a0a0"></div>
<div class="t" style="left:484px;top:625px;width:183px;overflow:hidden;"><span id="s59" style="display:inline-block;transform-origin:0 0;transform:scaleX(0.8947);">7,09 GB</span></div>
<div class="t" style="left:484px;top:640px;width:183px;overflow:hidden;"><span id="s60" style="display:inline-block;transform-origin:0 0;transform:scaleX(0.9911);">Nepřiřazeno</span></div>
<div class="a" style="left:193px;top:683px;width:155px;height:49px;background:#f0f0f0;border-top:1px solid #fff;border-right:1px solid #fff"></div>
<div class="a" style="left:350px;top:685px;width:1px;height:47px;background:#a0a0a0"></div>
<div class="t" style="left:220px;top:692px;font-weight:bold;"><span id="s61" style="display:inline-block;transform-origin:0 0;transform:scaleX(0.9881);">Jednotka CD-ROM 0</span></div>
<div class="t" style="left:202px;top:707px;"><span id="s62" style="display:inline-block;transform-origin:0 0;transform:scaleX(0.9189);">Disk DVD (E:)</span></div>
<svg style="left:204px;top:688px;" width="16" height="17" viewBox="0 0 16 17"><circle cx="9.5" cy="5.5" r="4.8" fill="#d8d8d8" stroke="#909090" stroke-width="0.8"/><circle cx="9.5" cy="5.5" r="1.5" fill="#fff" stroke="#909090" stroke-width="0.6"/><rect x="0.5" y="9.5" width="13" height="3.5" fill="url(#gdrvtop)"/><rect x="0.5" y="13" width="13" height="3" fill="#303030"/><rect x="10" y="13.8" width="2" height="1.5" fill="#40e040"/></svg>
<div class="a" style="left:193px;top:732px;width:676px;height:20px;background:#f0f0f0;border-top:1px solid #fff;border-left:1px solid #fff;border-right:1px solid #a0a0a0;border-bottom:1px solid #a0a0a0"></div>
<div class="a" style="left:198px;top:735px;width:12px;height:14px;background:#fff"></div>
<div class="a" style="left:199px;top:736px;width:10px;height:12px;background:#000"></div>
<div class="t" style="left:214px;top:735px;"><span id="s63" style="display:inline-block;transform-origin:0 0;transform:scaleX(0.9926);">Nepřiřazeno</span></div>
<div class="a" style="left:283px;top:735px;width:12px;height:14px;background:#fff"></div>
<div class="a" style="left:284px;top:736px;width:10px;height:12px;background:#000080"></div>
<div class="t" style="left:299px;top:735px;"><span id="s64" style="display:inline-block;transform-origin:0 0;transform:scaleX(1.0122);">Primární oddíl</span></div>
<div class="a" style="left:874px;top:83px;width:190px;height:671px;background:#fff;border-top:1px solid #a0a0a0;border-left:1px solid #a0a0a0;border-right:1px solid #fff;border-bottom:1px solid #fff;box-shadow:inset 1px 1px #696969,inset -1px -1px #e3e3e3"></div>
<div class="a" style="left:876px;top:85px;width:186px;height:20px;background:#f0f0f0"></div>
<div class="a" style="left:876px;top:105px;width:186px;height:1px;background:#a0a0a0"></div>
<div class="a" style="left:876px;top:106px;width:186px;height:26px;background:linear-gradient(#c4d8ee,#9fbadb)"></div>
<div class="t" style="left:881px;top:89px;font-weight:bold;"><span id="s65" style="display:inline-block;transform-origin:0 0;transform:scaleX(1.0005);">Akce</span></div>
<div class="t" style="left:883px;top:113px;"><span id="s66" style="display:inline-block;transform-origin:0 0;transform:scaleX(0.9565);">Správa disků</span></div>
<div class="t" style="left:907px;top:137px;"><span id="s67" style="display:inline-block;transform-origin:0 0;transform:scaleX(0.9449);">Další akce</span></div>
<svg style="left:1046px;top:116px;" width="10" height="7" viewBox="0 0 10 7"><path d="M0 6L5 1L10 6Z" fill="#000"/></svg>
<svg style="left:1049px;top:139px;" width="6" height="10" viewBox="0 0 6 10"><path d="M0 0L5.5 4.5L0 9Z" fill="#000"/></svg>
<div class="a" style="left:0px;top:754px;width:1064px;height:20px;background:#f0f0f0;border-top:1px solid #d9d9d9"></div>
<div class="a" style="left:843px;top:756px;width:1px;height:18px;background:#d9d9d9"></div>
<div class="a" style="left:976px;top:756px;width:1px;height:18px;background:#d9d9d9"></div>
<div class="a" style="left:1061px;top:756px;width:1px;height:18px;background:#d9d9d9"></div>
</body></html>
